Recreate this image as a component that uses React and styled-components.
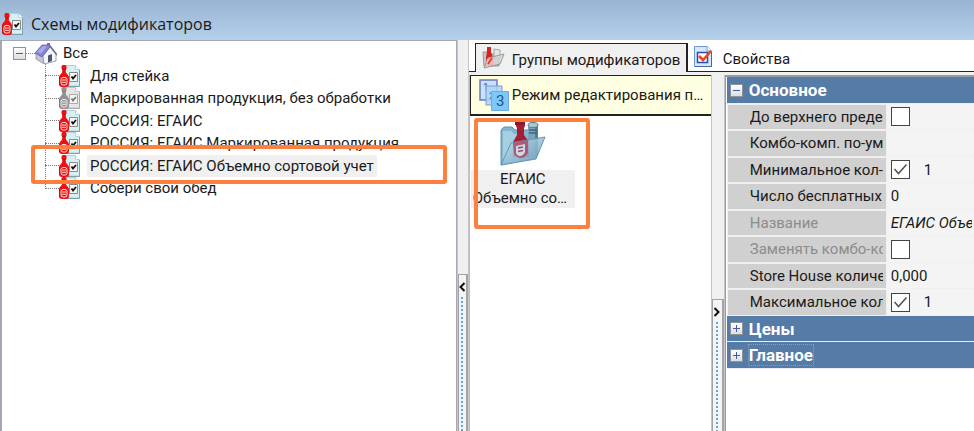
import React, { useState } from 'react';
import styled, { createGlobalStyle, css } from 'styled-components';

const GlobalStyle = createGlobalStyle`
  * {
    box-sizing: border-box;
  }

  html,
  body {
    margin: 0;
    overflow: hidden;
  }

  body,
  button,
  input {
    font-family: Roboto, 'Liberation Sans', sans-serif;
    font-size: 15px;
    line-height: 20px;
    color: #1a1a1a;
  }

  button {
    margin: 0;
    padding: 0;
    border: 0;
    background: none;
    text-align: left;
  }
`;

const schemes = [
    { title: 'Для стейка' },
    { title: 'Маркированная продукция, без обработки', disabled: true },
    { title: 'РОССИЯ: ЕГАИС' },
    { title: 'РОССИЯ: ЕГАИС Маркированная продукция' },
    { title: 'РОССИЯ: ЕГАИС Объемно сортовой учет', marked: true },
    { title: 'Собери свой обед' },
];

const properties = [
    { id: 'upper', label: 'До верхнего предела', check: false },
    { id: 'combo', label: 'Комбо-комп. по-умолчанию' },
    { id: 'min', label: 'Минимальное кол-во', check: true, value: '1' },
    { id: 'free', label: 'Число бесплатных', value: '0' },
    { id: 'name', label: 'Название', value: 'ЕГАИС Объемно сортовой учет', muted: true },
    { id: 'replace', label: 'Заменять комбо-компонент', check: false, muted: true },
    { id: 'store', label: 'Store House количество', value: '0,000' },
    { id: 'max', label: 'Максимальное количество', check: true, value: '1' },
];

const SchemeIcon = ({ gray = false }) => {
    const main = gray ? '#929292' : '#ee1111';
    const dark = gray ? '#747474' : '#b80c0c';
    return (
        <svg width={22} height={22} viewBox="0 0 22 22" fill="none" aria-hidden="true">
            <path d="M5 .5h11.500l4 4V21H5z" fill={gray ? '#e6e6e6' : '#d6f1f5'} stroke={gray ? '#c4c4c4' : '#b4d0d4'} />
            <path d="M16.500 .5v4h4" fill="#fff" stroke={gray ? '#c8c8c8' : '#b4d4d8'} />
            <path d="M20.500 5v16.500H8" stroke={gray ? '#aaa' : '#829fa5'} />
            <path d="M10.500 7.500h8v9h-8z" fill="#f4f4f4" stroke={gray ? '#aaa' : '#8a8a8a'} />
            <path d="M12.500 11.500l1.500 2 3-3.500" stroke={gray ? '#777' : '#111'} strokeWidth={1.800} />
            <path d="M3.200 0h3.600v6.500c0 2.500 3.200 3 3.200 6V19q0 3-3 3H3q-3 0-3-3v-6.500c0-3 3.200-3.500 3.200-6z" fill={main} />
            <path d="M2.500 1h5v3h-5z" fill={main} />
            <path d="M3 4.500h4M.5 12v8" stroke={dark} strokeWidth={.8} />
            <rect x={2} y={12.500} width={6} height={7.500} rx={2} fill={main} stroke="#fff" strokeOpacity={.85} />
            <path d="M3 15h4M3 17.300h4" stroke="#fff" strokeOpacity={.85} />
        </svg>
    );
};

const HouseIcon = () => (
    <svg width={22} height={22} viewBox="0 0 22 22" aria-hidden="true">
        <path d="M12 1h3v5h-3z" fill="#6f6ec8" />
        <path d="M1 11v6l8 5v-8z" fill="#c2c4ce" stroke="#90939f" strokeWidth={.8} />
        <path d="M8 14l7-9 6 7v7l-12 3z" fill="#f5f6fa" stroke="#8b8f9d" strokeWidth={.8} />
        <path d="M0 11L7 3l8 0 0 2-8 10z" fill="#8683d5" stroke="#6764b4" strokeWidth={.8} />
        <path d="M2 10l6-6 4 .5-6 7z" fill="#a9a7ea" />
        <path d="M15 4l7 9" stroke="#696a8c" strokeWidth={1.500} />
        <path d="M13 13.500l4-1.500v7l-4 1.500z" fill="#4f5675" />
    </svg>
);

const GroupIcon = () => (
    <svg width={24} height={22} viewBox="0 0 24 22" aria-hidden="true">
        <path d="M1 5h5l2 2h9v12H2z" fill="#c4c8c8" stroke="#949a9a" />
        <path d="M12 2l6 1v8h-6z" fill="#e4e6e6" stroke="#a0a6a6" />
        <path d="M5 0h4v5l2 5v8H4v-8l1-5z" fill="#dc2020" />
        <path d="M2 21L6 11l16-4-4 10z" fill="#d4d7d7" fillOpacity={.75} stroke="#949a9a" />
        <path d="M5 12l7-2-1 7-3 2-4-1z" fill="#f3b3ab" />
        <path d="M6 17l4-6" stroke="#dc3535" strokeWidth={1.500} />
    </svg>
);

const CheckPageIcon = () => (
    <svg width={18} height={21} viewBox="0 0 18 21" fill="none" aria-hidden="true">
        <path d="M.5 .5H13l4.500 4.500v15.500H.5z" fill="#d5e8fd" stroke="#6f96d1" />
        <path d="M13 .5V5h4.500" fill="#fff" stroke="#6f96d1" />
        <path d="M1 20.500h16.500V6" stroke="#3f68ad" />
        <path d="M3.500 6.500h10v10h-10z" fill="#fff" stroke="#2c4ea8" strokeWidth={1.500} />
        <path d="M5 10l4 4 8-9" stroke="#ef4421" strokeWidth={2.600} />
    </svg>
);

const ModeIcon = () => (
    <svg width={30} height={32} viewBox="0 0 30 32" aria-hidden="true">
        <path d="M1 1h17v20H1z" fill="#c8e2fb" stroke="#6d78bb" strokeWidth={1.500} />
        <text x={4} y={12} fontSize={10} fontFamily="Roboto" fill="#3d658a">1</text>
        <path d="M7 7h16v19H7z" fill="#a9d5f8" fillOpacity={.85} stroke="#7e99d4" />
        <text x={10} y={20} fontSize={9} fontFamily="Roboto" fill="#527da4">2</text>
        <path d="M12.500 12.500h17v19h-17z" fill="#7dc8fb" stroke="#72a7df" />
        <text x={17} y={27} fontSize={15} fontFamily="Roboto" fill="#23547e">3</text>
    </svg>
);

const FolderIcon = () => (
    <svg width={46} height={44} viewBox="0 0 46 44" aria-hidden="true">
        <defs>
            <linearGradient id="folderFront" x1="0" y1="0" x2="1" y2="1">
                <stop offset="0" stopColor="#c2e2f0" />
                <stop offset="1" stopColor="#6b9cbb" />
            </linearGradient>
        </defs>
        <path d="M1 8l3-3h8l3 3h21v28L1 43z" fill="#83b5d0" stroke="#5e91b0" />
        <path d="M3 9h8l3 3h5v28H3z" fill="#a6cfe2" />
        <path d="M28 3q5-3 10 0v31l-10 2z" fill="#7ba3b9" />
        <path d="M35 4h3v30h-3z" fill="#557f99" />
        <ellipse cx={33} cy={3} rx={5} ry={2.500} fill="#acc6d2" stroke="#587c93" />
        <path d="M29 8h8M29 11h8" stroke="#3f6680" strokeWidth={1.300} />
        <path d="M16 1h9v3l-1 2v7l5 7v15H13V20l4-7V6l-1-2z" fill="#a51e35" />
        <path d="M15 0h10v3H15z" fill="#8f182c" />
        <path d="M1 43L11 21l34-6-9 22z" fill="url(#folderFront)" fillOpacity={.85} stroke="#6597b3" />
        <path d="M13 21l15-3v13q-3 5-7 5t-7-4z" fill="#b0405a" fillOpacity={.75} />
        <path d="M16 24l9-2v8q-2 4-5 4t-4-3z" fill="#c8dce8" />
        <path d="M18 26l5-1M18 29.500l5-1" stroke="#b0405a" strokeWidth={1.300} />
    </svg>
);

const Window = styled.div`
  display: flex;
  flex-direction: column;
  height: 100vh;
  background: #f0f0f0;
`;

const TitleBar = styled.header`
  display: flex;
  flex: none;
  align-items: center;
  gap: 7px;
  height: 40px;
  padding: 7px 0 0 2px;
  background: linear-gradient(#98b4d2, #b5d0ea);
`;

const Title = styled.h1`
  margin: 0;
  font: 400 16px/24px 'Open Sans', sans-serif;
`;

const Body = styled.main`
  display: flex;
  flex: 1;
  min-height: 0;
`;

const TreePanel = styled.section`
  flex: 0 0 calc(47% - 1px);
  min-width: 0;
  padding: 1px 0 0 11px;
  border: solid #a4a9b4;
  border-width: 1px 1px 0 2px;
  background: #fff;
`;

const RootRow = styled.div`
  display: flex;
  align-items: center;
  height: 22px;
`;

const Expander = styled.button`
  flex: none;
  width: 13px;
  height: 13px;
  border: 1px solid #8f9298;
  background:
    linear-gradient(#3f5fae, #3f5fae) center / 7px 1px no-repeat,
    ${({ $open }) => !$open && 'linear-gradient(#3f5fae, #3f5fae) center / 1px 7px no-repeat,'}
    linear-gradient(#fff, #dedede);
`;

const Dots = styled.span`
  width: ${({ $wide }) => ($wide ? '14px' : '9px')};
  border-top: 1px dotted #777;
`;

const RootLabel = styled.span`
  padding-left: 6px;
`;

const Branch = styled.ul`
  margin: 0 0 0 32px;
  padding: 0;
  list-style: none;
  background: repeating-linear-gradient(#777 0 1px, transparent 1px 2px) 0 0 / 1px 125px no-repeat;
`;

const TreeItem = styled.li`
  position: relative;
  display: flex;
  align-items: center;
  height: 23px;

  &:nth-child(even) {
    height: 22px;
  }
`;

const TreeLabel = styled.button`
  height: 22px;
  margin-left: 6px;
  padding: 0 3px;
  white-space: nowrap;
  background: ${({ $selected }) => ($selected ? '#f0f0f0' : 'transparent')};
`;

const Callout = styled.span`
  position: absolute;
  z-index: 1;
  border: 4px solid #ff7f3f;
  border-radius: 3px;
  pointer-events: none;
  ${({ $kind }) => $kind === 'row'
        ? css`top: -9px; left: -14px; width: 416px; height: 39px;`
        : css`top: 2px; left: 4px; width: 116px; height: 111px;`}
`;

const SplitterTrack = styled.div`
  display: flex;
  flex: none;
  flex-direction: column;
  width: ${({ $wide }) => ($wide ? '14px' : '12px')};
  padding-top: ${({ $offset }) => $offset}px;
  border-left: 1px solid #c4c4ca;
  border-right: 1px solid #c4c4ca;
`;

const SplitterButton = styled.button`
  display: flex;
  flex: 1;
  flex-direction: column;
  align-items: center;
  gap: 4px;
  padding-top: 6px;
  border: solid #a4a4a7;
  border-width: 1px 2px 0 1px;
  background: #f4f4f4;

  &::after {
    content: '';
    flex: 1;
    width: 2px;
    background: repeating-linear-gradient(#5ba7de 0 2px, transparent 2px 4px);
  }
`;

const Splitter = ({ back = false, offset, label }) => (
    <SplitterTrack $wide={!back} $offset={offset}>
        <SplitterButton type="button" aria-label={label}>
            <svg width={6} height={12} viewBox="0 0 6 12" fill="none" stroke="#111" strokeWidth={2}>
                <path d={back ? 'M5.500 2L1.500 6l4 4' : 'M.5 2l4 4-4 4'} />
            </svg>
        </SplitterButton>
    </SplitterTrack>
);

const Details = styled.section`
  display: flex;
  flex: 1;
  flex-direction: column;
  min-width: 0;
`;

const Tabs = styled.nav`
  display: flex;
  flex: none;
  height: 32px;
  margin-bottom: 3px;
  background: linear-gradient(#222, #222) bottom / 100% 1px no-repeat #fff;
`;

const Tab = styled.button`
  display: flex;
  align-items: center;
  gap: 11px;
  white-space: nowrap;
  padding: 0 6px;

  ${({ $active }) => $active && css`
    flex: none;
    width: 213px;
    margin: 3px 0 0 6px;
    padding: 0 0 0 6px;
    gap: 6px;
    border: solid #222;
    border-width: 1px 2px 0 1px;
    background: #f0f0f0;
  `}
`;

const TabText = styled.span`
  padding-top: ${({ $low }) => ($low ? '6px' : '4px')};
`;

const Panes = styled.div`
  display: flex;
  flex: 1;
  min-height: 0;
`;

const GroupPane = styled.section`
  flex: none;
  width: 242px;
  border-left: 1px solid #bcbcc5;
  background: #fff;
`;

const ModeBar = styled.button`
  display: flex;
  align-items: center;
  gap: 3px;
  width: 100%;
  height: 41px;
  padding-left: 8px;
  border: solid #222;
  border-width: 1px 0 2px 1px;
  background: #ffffe1;
`;

const Ellipsis = styled.span`
  flex: 1;
  overflow: hidden;
  padding-right: 5px;
  text-overflow: ellipsis;
  white-space: nowrap;
`;

const Groups = styled.div`
  position: relative;
  padding: 6px 0 0 1px;
`;

const GroupItem = styled.button`
  display: flex;
  flex-direction: column;
  align-items: center;
  gap: 4px;
  width: 104px;
`;

const GroupText = styled.span`
  width: 100%;
  overflow: hidden;
  line-height: 19px;
  padding: 0 2px;
  text-align: center;
  text-overflow: ellipsis;
  white-space: nowrap;
  background: #f0f0f0;
`;

const GroupTexts = styled.span`
  display: flex;
  flex-direction: column;
  width: 100%;
`;

const Inspector = styled.form`
  flex: 1;
  min-width: 0;
  padding-left: 1px;
  overflow: hidden;
  border: solid #959ba5;
  border-width: 2px 0 0 1px;
  background: #fff;
`;

const rowHeight = css`
  height: 27px;

  &:nth-child(even) {
    height: 26px;
  }
`;

const Category = styled.h2`
  ${rowHeight}
  display: flex;
  align-items: center;
  gap: 6px;
  margin: 0;
  padding-left: 3px;
  border-bottom: 1px solid #e9eef4;
  background: #557ca7;
  color: #fff;
  font-size: 17px;
`;

const CategoryText = styled.span`
  outline: ${({ $focused }) => ($focused ? '1px dotted #a79a86' : 'none')};
`;

const Property = styled.div`
  ${rowHeight}
  display: flex;
  border-bottom: 1px solid #f0f0f0;
  background: #f4f4f4;
`;

const PropertyLabel = styled.label`
  flex: none;
  width: 160px;
  padding: 2px 3px 0 22px;
  border: solid #f0f0f0;
  border-width: 1px 1px 0;
  background: #d0d0d0;
  color: ${({ $muted }) => ($muted ? '#8c8c8c' : '#1a1a1a')};
`;

const Clip = styled.span`
  display: block;
  overflow: hidden;
  white-space: nowrap;
`;

const Value = styled.div`
  display: flex;
  flex: 1;
  align-items: center;
  gap: 14px;
  min-width: 0;
  padding-left: 4px;
`;

const Check = styled.input`
  appearance: none;
  flex: none;
  width: 19px;
  height: 19px;
  margin: 0;
  border: 1px solid #444;
  background: #fff;

  &:checked {
    background: #fff url("data:image/svg+xml,%3Csvg xmlns='http://www.w3.org/2000/svg' viewBox='0 0 17 17'%3E%3Cpath d='M2.500 8l4 4.500 8-9' fill='none' stroke='%23555' stroke-width='1.600'/%3E%3C/svg%3E");
  }
`;

const ValueInput = styled.input`
  flex: 1;
  min-width: 0;
  padding: 0 2px 0 0;
  border: 0;
  outline: 0;
  background: transparent;
  font-style: ${({ $italic }) => ($italic ? 'italic' : 'normal')};
`;

const PropertyRow = ({ id, label, check, value, muted }) => (
    <Property>
        <PropertyLabel htmlFor={id} $muted={muted}>
            <Clip>{label}</Clip>
        </PropertyLabel>
        <Value>
            {check !== undefined && <Check id={id} type="checkbox" defaultChecked={check} />}
            {value !== undefined && (
                <ValueInput
                    id={check === undefined ? id : `${id}-value`}
                    aria-label={label}
                    defaultValue={value}
                    $italic={muted}
                />
            )}
        </Value>
    </Property>
);

const App = () => {
    const [selected, setSelected] = useState(4);

    return (
        <Window>
            <GlobalStyle />
            <TitleBar>
                <SchemeIcon />
                <Title>Схемы модификаторов</Title>
            </TitleBar>
            <Body>
                <TreePanel>
                    <RootRow>
                        <Expander type="button" $open aria-label="Свернуть" />
                        <Dots />
                        <HouseIcon />
                        <RootLabel>Все</RootLabel>
                    </RootRow>
                    <Branch>
                        {schemes.map((item, i) => (
                            <TreeItem key={item.title}>
                                <Dots $wide />
                                <SchemeIcon gray={item.disabled} />
                                <TreeLabel type="button" $selected={selected === i} onClick={() => setSelected(i)}>
                                    {item.title}
                                </TreeLabel>
                                {item.marked && <Callout $kind="row" />}
                            </TreeItem>
                        ))}
                    </Branch>
                </TreePanel>
                <Splitter back offset={234} label="Скрыть дерево" />
                <Details>
                    <Tabs>
                        <Tab type="button" $active>
                            <GroupIcon />
                            <TabText>Группы модификаторов</TabText>
                        </Tab>
                        <Tab type="button">
                            <CheckPageIcon />
                            <TabText $low>Свойства</TabText>
                        </Tab>
                    </Tabs>
                    <Panes>
                        <GroupPane>
                            <ModeBar type="button">
                                <ModeIcon />
                                <Ellipsis>Режим редактирования порядка</Ellipsis>
                            </ModeBar>
                            <Groups>
                                <GroupItem type="button">
                                    <FolderIcon />
                                    <GroupTexts>
                                        <GroupText>ЕГАИС</GroupText>
                                        <GroupText>Объемно сортовой</GroupText>
                                    </GroupTexts>
                                </GroupItem>
                                <Callout $kind="group" />
                            </Groups>
                        </GroupPane>
                        <Splitter offset={224} label="Скрыть свойства" />
                        <Inspector>
                            <Category>
                                <Expander type="button" $open aria-label="Свернуть Основное" />
                                <CategoryText>Основное</CategoryText>
                            </Category>
                            {properties.map((item) => (
                                <PropertyRow key={item.id} {...item} />
                            ))}
                            <Category>
                                <Expander type="button" aria-label="Развернуть Цены" />
                                <CategoryText>Цены</CategoryText>
                            </Category>
                            <Category>
                                <Expander type="button" aria-label="Развернуть Главное" />
                                <CategoryText $focused>Главное</CategoryText>
                            </Category>
                        </Inspector>
                    </Panes>
                </Details>
            </Body>
        </Window>
    );
};

export default App;
